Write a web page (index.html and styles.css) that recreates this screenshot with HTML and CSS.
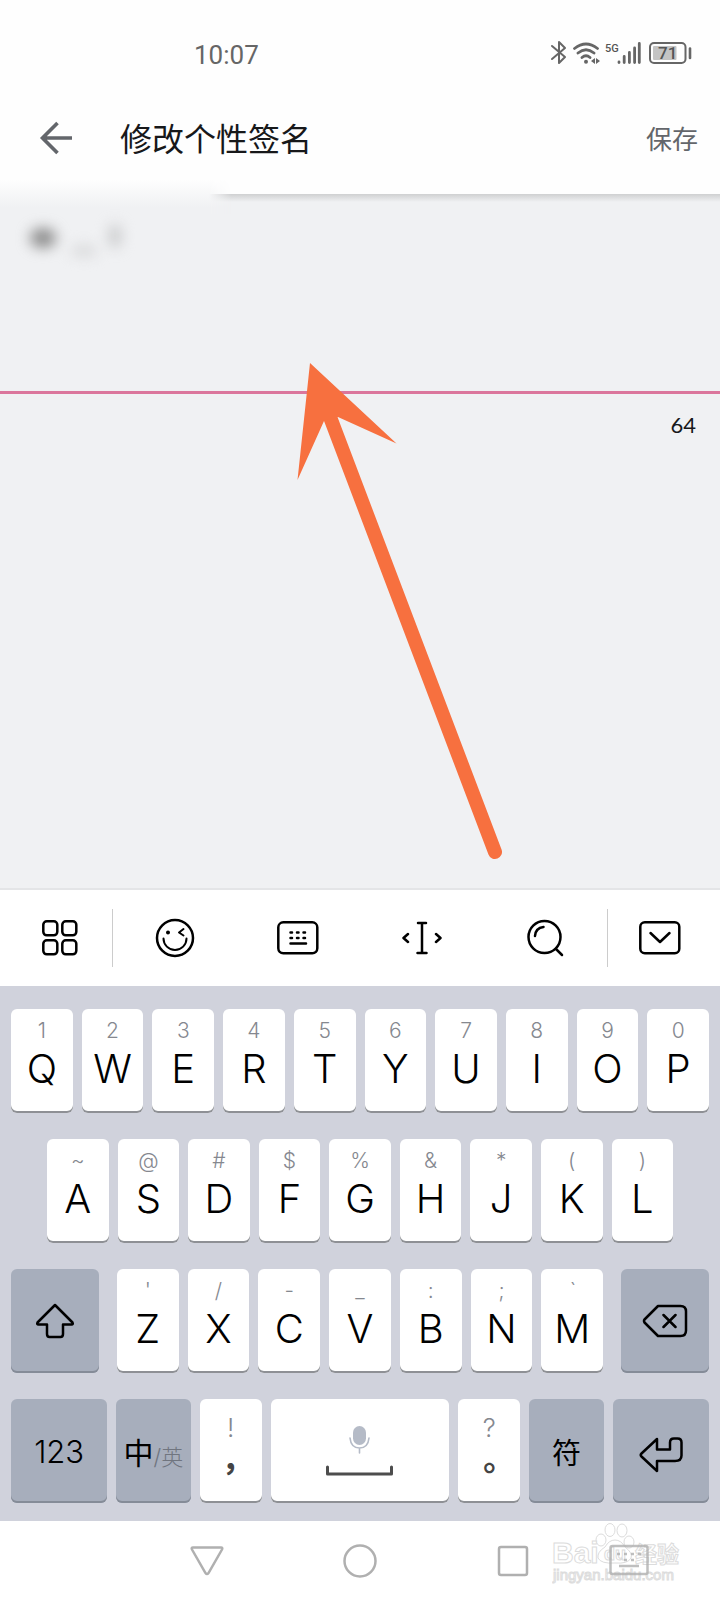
FILE: index.html
```html
<!DOCTYPE html>
<html lang="zh-CN">
<head>
<meta charset="utf-8">
<meta name="viewport" content="width=device-width, initial-scale=1">
<title>修改个性签名</title>
<link rel="stylesheet" href="styles.css">
</head>
<body>
<div class="screen">
  <div class="status">
    <span class="clock">10:07</span>
    <div class="status-icons">
      <svg width="142" height="26" viewBox="550 40 142 26" fill="none" stroke="#666" stroke-width="2" stroke-linecap="round" stroke-linejoin="round" role="img" aria-label="蓝牙 无线网络 信号 电量">
        <path d="M552 46l13 11-6 6V42l6 6-13 11"/>
        <path d="M574.500 48.500q11.500-9 23 0M578 53q8-6.500 16 0M582 57.500q4-3.500 8 0" stroke-width="2.800"/>
        <circle cx="586" cy="61.800" r="2" fill="#666" stroke="none"/>
        <path d="M595 58v6l-4-3zM596 58v6l4-3z" fill="#666" stroke="none"/>
        <path d="M619 62.500v-.5M624.200 62.500v-6M629.400 62.500v-10M634.600 62.500v-14.500M639.300 62.500V43.500" stroke-width="2.800"/>
        <rect x="650" y="43" width="35.500" height="20" rx="4"/>
        <rect x="653" y="46" width="23.500" height="14" rx="1" fill="#c4c4c4" stroke="none"/>
        <path d="M690 48.500v9.500" stroke-width="2.600"/>
        <text x="605" y="52" class="net">5G</text>
        <text x="658" y="59" class="charge">71</text>
      </svg>
    </div>
  </div>

  <header class="header">
    <button class="plain" aria-label="返回">
      <svg width="34" height="34" viewBox="0 0 34 34" fill="none" stroke="#63666b" stroke-width="3.600"><path d="M33 17H4M18.500 2L3.500 17l15 15"/></svg>
    </button>
    <h1 class="title">修改个性签名</h1>
    <button class="plain save">保存</button>
  </header>

  <main class="content">
    <textarea class="signature" aria-label="个性签名"></textarea>
    <output class="count">64</output>
    <svg class="smudge" width="150" height="70" viewBox="0 0 150 70" aria-hidden="true">
      <ellipse cx="43" cy="28" rx="13" ry="10" fill="#898989"/>
      <ellipse cx="84" cy="41" rx="13" ry="5" fill="#d3d4d5"/>
      <ellipse cx="115" cy="26" rx="6" ry="12" fill="#c6c7c8"/>
    </svg>
    <svg class="pointer" width="210" height="504" viewBox="294 360 210 504" aria-hidden="true">
      <path d="M330 417L495 852" stroke="#f7703f" stroke-width="14" stroke-linecap="round" fill="none"/>
      <path d="M310 363l86.500 80.500L338 417l-14 4-26.500 59z" fill="#f7703f"/>
    </svg>
  </main>

  <div class="toolbar">
    <button class="tool edge" aria-label="菜单">
      <svg width="36" height="36" viewBox="0 0 36 36"><rect x="1.300" y="1.300" width="14" height="14" rx="3.500"/><rect x="20.300" y="1.300" width="14" height="14" rx="3.500"/><rect x="1.300" y="20.300" width="14" height="14" rx="3.500"/><rect x="20.300" y="20.300" width="14" height="14" rx="3.500"/></svg>
    </button>
    <button class="tool" aria-label="表情">
      <svg width="40" height="40" viewBox="0 0 40 40"><circle cx="20" cy="20" r="18"/><path d="M8.500 20.500a11.200 11.200 0 0 0 23 0M28.500 11L24 14.500l4.500 3" stroke-width="2"/><circle cx="13" cy="14.500" r="1.200" fill="#000" stroke-width="1.600"/></svg>
    </button>
    <button class="tool" aria-label="键盘">
      <svg width="42" height="34" viewBox="0 0 42 34"><rect x="1.300" y="1.300" width="39" height="31" rx="5"/><path d="M13.500 11.500h1.500M20 11.500h1.500M26.500 11.500h1.500M13.500 17h1.500M20 17h1.500M26.500 17h1.500M13.500 22.500h15.500"/></svg>
    </button>
    <button class="tool" aria-label="移动光标">
      <svg width="40" height="34" viewBox="0 0 40 34"><path d="M16 2h8M20 2v30M15.500 32h9M6 13l-4.500 4L6 21M34 13l4.500 4-4.500 4"/></svg>
    </button>
    <button class="tool" aria-label="搜索">
      <svg width="38" height="38" viewBox="0 0 38 38"><circle cx="18.500" cy="18" r="16"/><path d="M9 17q.5-8 8.500-9M30 30l6 6"/></svg>
    </button>
    <button class="tool edge last" aria-label="收起键盘">
      <svg width="42" height="34" viewBox="0 0 42 34"><rect x="1.300" y="1.300" width="39" height="31" rx="4.500"/><path d="M11.500 12L21 21l9.500-9"/></svg>
    </button>
  </div>

  <div class="keyboard">
    <div class="row">
      <button class="key"><small>1</small><b>Q</b></button>
      <button class="key"><small>2</small><b>W</b></button>
      <button class="key"><small>3</small><b>E</b></button>
      <button class="key"><small>4</small><b>R</b></button>
      <button class="key"><small>5</small><b>T</b></button>
      <button class="key"><small>6</small><b>Y</b></button>
      <button class="key"><small>7</small><b>U</b></button>
      <button class="key"><small>8</small><b>I</b></button>
      <button class="key"><small>9</small><b>O</b></button>
      <button class="key"><small>0</small><b>P</b></button>
    </div>
    <div class="row inset">
      <button class="key"><small>~</small><b>A</b></button>
      <button class="key"><small>@</small><b>S</b></button>
      <button class="key"><small>#</small><b>D</b></button>
      <button class="key"><small>$</small><b>F</b></button>
      <button class="key"><small>%</small><b>G</b></button>
      <button class="key"><small>&amp;</small><b>H</b></button>
      <button class="key"><small>*</small><b>J</b></button>
      <button class="key"><small>(</small><b>K</b></button>
      <button class="key"><small>)</small><b>L</b></button>
    </div>
    <div class="row split">
      <button class="key dark shift" aria-label="大写">
        <svg width="40" height="36" viewBox="0 0 40 36"><path d="M20 2L2.500 19.500q-1 2 1 2H12V31q0 3 2.500 3h11q2.500 0 2.500-3v-9.500h8.500q2 0 1-2z"/></svg>
      </button>
      <div class="letters">
        <button class="key"><small>'</small><b>Z</b></button>
        <button class="key"><small>/</small><b>X</b></button>
        <button class="key"><small>-</small><b>C</b></button>
        <button class="key"><small>_</small><b>V</b></button>
        <button class="key"><small>:</small><b>B</b></button>
        <button class="key"><small>;</small><b>N</b></button>
        <button class="key"><small>ˋ</small><b>M</b></button>
      </div>
      <button class="key dark shift" aria-label="删除">
        <svg width="46" height="34" viewBox="0 0 46 34"><path d="M16 2h22.500q5.500 0 5.500 5.500v19q0 5.500-5.500 5.500H16L2.500 18.500q-1-1.500 0-3zM21.500 11l12 12M33.500 11l-12 12"/></svg>
      </button>
    </div>
    <div class="row">
      <button class="key dark wide num">123</button>
      <button class="key dark mode"><span class="zh">中</span><span class="en">/英</span></button>
      <button class="key punct"><small>!</small><b>，</b></button>
      <button class="key space" aria-label="空格">
        <svg width="70" height="52" viewBox="326 1424 70 52"><rect x="354" y="1425" width="13" height="19" rx="6.500" fill="#b5bbc7" stroke="none"/><path d="M351 1437q1 10 9.500 10t9.500-10M360.500 1447v5" stroke="#b5bbc7" stroke-width="1.600"/><path d="M328.500 1466v7h64v-7" stroke="#4d4d4d" stroke-width="3"/></svg>
      </button>
      <button class="key punct"><small>?</small><b>。</b></button>
      <button class="key dark mode sym">符</button>
      <button class="key dark wide enter" aria-label="换行">
        <svg width="44" height="36" viewBox="0 0 44 36"><path d="M18 2L2.500 16.500q-1.500 1.500 0 3L18 34V24h18q6.500 0 6.500-5.500V5.500q0-4-4-4h-3.500q-4 0-4 4V12.500H18z"/></svg>
      </button>
    </div>
  </div>

  <nav class="nav">
    <button class="plain" aria-label="返回"><svg width="34" height="34" viewBox="0 0 34 34"><path d="M3 3.500h28q2 0 1 2L18.500 29q-1.500 2-3 0L2 5.500q-1-2 1-2z"/></svg></button>
    <button class="plain" aria-label="主页"><svg width="34" height="34" viewBox="0 0 34 34"><circle cx="17" cy="17" r="15.500"/></svg></button>
    <button class="plain" aria-label="最近任务"><svg width="34" height="34" viewBox="0 0 34 34"><rect x="3" y="3" width="28" height="28" rx="2"/></svg></button>
    <svg class="watermark" width="130" height="64" viewBox="552 1520 130 64" aria-label="Baidu经验">
      <g class="paw">
        <ellipse cx="601" cy="1539" rx="5" ry="6"/><ellipse cx="610" cy="1529" rx="5" ry="6.500"/><ellipse cx="622" cy="1529.500" rx="5" ry="6.500"/><ellipse cx="629" cy="1541" rx="5" ry="6"/>
        <path d="M615 1539q6 0 10 7 8 6 6 11-3 6-16 5-14 1-17-5-1-6 7-11 4-7 10-7z"/>
      </g>
      <text x="552" y="1562" class="brand">Bai</text>
      <text x="604" y="1559" class="du">du</text>
      <text x="635" y="1561" class="exp">经验</text>
      <text x="553" y="1579" class="site">jingyan.baidu.com</text>
    </svg>
    <button class="plain ime" aria-label="切换输入法"><svg width="40" height="34" viewBox="0 0 40 34"><rect x="1.500" y="3" width="37" height="28" rx="2"/><path d="M8 11h3M15 11h3M22 11h3M29 11h3M15 17h3M22 17h3M10 23h20"/></svg></button>
  </nav>
</div>
</body>
</html>
```

FILE: styles.css
```css
* { box-sizing: border-box; }
body {
  margin: 0;
  background: #fefefe;
  font-family: Inter, "Noto Sans CJK SC", sans-serif;
  color: #17181a;
}
button {
  margin: 0;
  padding: 0;
  border: 0;
  font: inherit;
  color: inherit;
  background: none;
}
svg { display: block; }
.screen { display: flex; flex-direction: column; min-height: 100vh; }

.status {
  display: flex;
  align-items: center;
  justify-content: space-between;
  height: 84px;
  padding: 22px 28px 0 194px;
}
.clock { padding-top: 3px; font: 26px/1 Roboto, sans-serif; color: #666; }
.net { font: 500 11px Roboto, sans-serif; fill: #555; stroke: none; }
.charge { font: 500 17px Roboto, sans-serif; fill: #555; stroke: none; }

.header {
  display: flex;
  align-items: center;
  height: 110px;
  padding: 0 22px 2px 39px;
}
.title {
  flex: 1;
  margin: 0 0 2px 47px;
  font: 400 32px/1 "Noto Sans CJK SC", sans-serif;
}
.save { font: 26px/1 "Noto Sans CJK SC", sans-serif; color: #63666b; }

.content {
  position: relative;
  flex: 1;
  display: flex;
  flex-direction: column;
  background: linear-gradient(#cfd0d1, #f0f1f3 8px);
  border-bottom: 2px solid #e4e5e7;
}
.content::before {
  content: "";
  position: absolute;
  left: 0;
  top: -14px;
  width: 232px;
  height: 34px;
  background: linear-gradient(#fefefe, #f0f1f3 80%);
  mask-image: linear-gradient(90deg, #000 90%, transparent);
}
.signature {
  width: 100%;
  height: 200px;
  padding: 24px;
  border: 0;
  border-bottom: 3px solid #db769c;
  outline: 0;
  resize: none;
  background: none;
  font: 26px/32px "Noto Sans CJK SC", sans-serif;
}
.count {
  align-self: flex-end;
  padding: 17px 24px 0 0;
  font: 22px/28px Lato, sans-serif;
}
.smudge { position: absolute; left: 0; top: 16px; filter: blur(7px); overflow: visible; }
.pointer { position: absolute; left: 294px; top: 166px; }

.toolbar {
  display: flex;
  align-items: center;
  height: 96px;
  padding: 0 8px;
  background: #fff;
}
.tool {
  flex: 1;
  display: grid;
  place-items: center;
  height: 58px;
}
.tool svg, .key svg {
  fill: none;
  stroke: #000;
  stroke-width: 2.500;
  stroke-linecap: round;
  stroke-linejoin: round;
}
.edge { flex: 0 0 105px; border-right: 1px solid #ccc; }
.last { border-right: 0; border-left: 1px solid #ccc; }

.keyboard {
  display: flex;
  flex-direction: column;
  gap: 26px;
  padding: 23px 11px 18px;
  background: #d0d2dc;
}
.row { display: flex; gap: 9px; }
.inset { padding: 0 36px; }
.split { gap: 18px; }
.letters { flex: 487; display: flex; gap: 9px; }
.key {
  flex: 62 1 0;
  display: flex;
  flex-direction: column;
  align-items: center;
  height: 104px;
  min-width: 0;
  padding-top: 10px;
  border-radius: 6px;
  background: #fff;
  color: #000;
  box-shadow: inset 0 -2px #8e9095;
}
.key small { font-size: 21px; font-weight: 300; line-height: 24px; color: #85888f; }
.key b { font-size: 40px; font-weight: 300; line-height: 52px; }
.dark, .space {
  flex-direction: row;
  justify-content: center;
  padding-top: 0;
}
.dark { background: #a7aebc; box-shadow: inset 0 -2px #858c98; }
.shift { flex: 88 1 0; }
.wide { flex: 96 1 0; }
.mode { flex: 74 1 0; }
.space { flex: 178 1 0; }
.enter { padding-top: 8px; }
.num { font-size: 31px; font-weight: 300; }
.zh { font-size: 30px; }
.en { padding-top: 8px; font-size: 22px; font-weight: 300; color: #70757f; }
.sym { font-size: 29px; }
.punct { padding-top: 17px; }
.punct small { font-size: 26px; }
.punct b { font: 700 32px/52px "Noto Sans CJK TC", sans-serif; color: #444; }

.nav {
  position: relative;
  display: flex;
  height: 79px;
  padding: 0 130px;
  background: #fff;
}
.nav .plain { flex: 1; display: grid; place-items: center; }
.nav .plain svg { fill: none; stroke: #b0b0b0; stroke-width: 2.500; }
.nav .ime { position: absolute; right: 71px; top: 22px; opacity: 0.8; }
.watermark { position: absolute; right: 38px; top: 0; }
.watermark text, .paw { fill: #fff; stroke: #dcdcdc; stroke-width: 1; }
.watermark .brand { font: 700 30px "Liberation Sans", sans-serif; }
.watermark .du { font: 700 18px "Liberation Sans", sans-serif; }
.watermark .exp { font: 700 22px "Noto Sans CJK SC", sans-serif; }
.watermark .site { font: 15px "Liberation Sans", sans-serif; }
```
